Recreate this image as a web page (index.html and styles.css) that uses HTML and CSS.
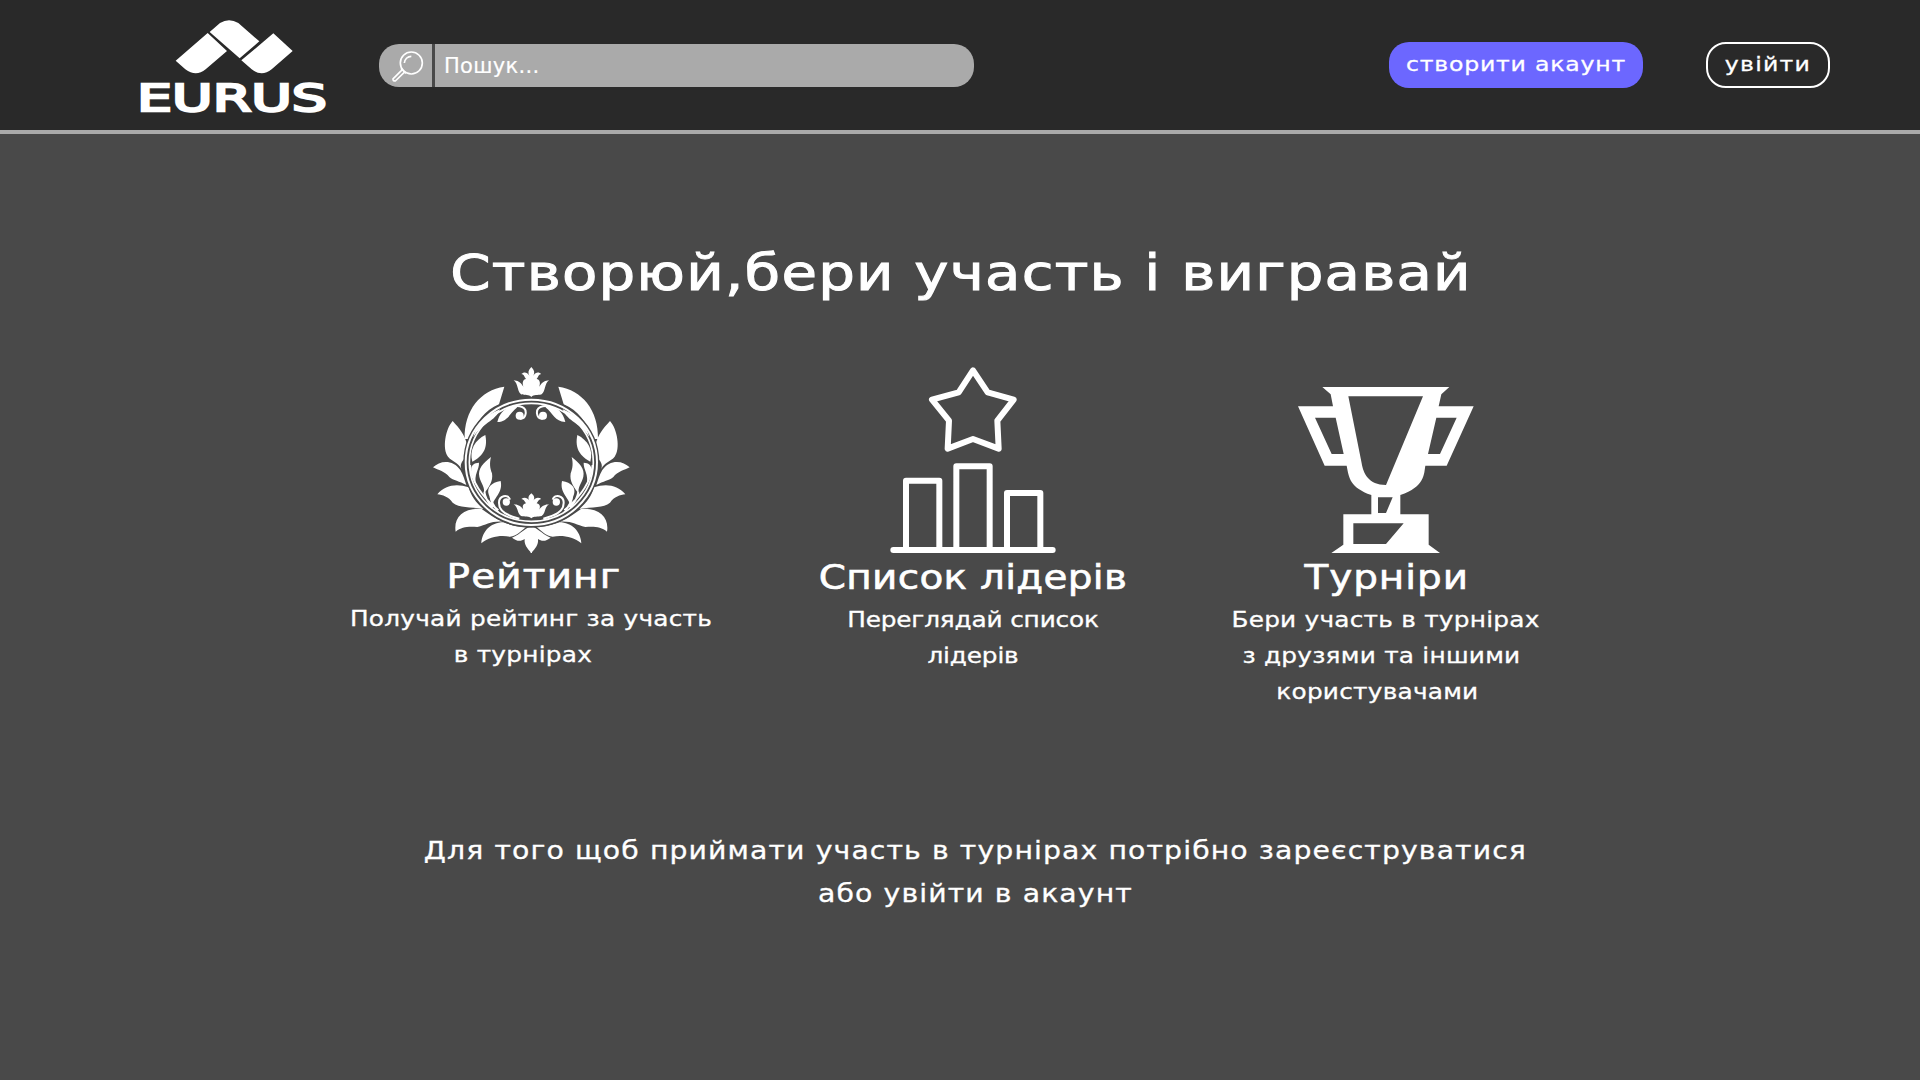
FILE: index.html
```html
<!DOCTYPE html>
<html lang="uk">
<head>
<meta charset="utf-8">
<title>Eurus</title>
<link rel="stylesheet" href="styles.css">
</head>
<body>
<header class="header">
  <a class="logo" aria-label="Eurus">
    <svg width="184" height="93" viewBox="63 57 552 279">
      <path d="M263 99L321 153L257 208Q228 232 196 208L167 182ZM269 96L300 69Q327 52 355 69L418 124L359 175ZM460 100L518 153L455 208Q425 232 395 208L364 181Z"/>
      <text class="logo-text" x="51" y="332" textLength="570" lengthAdjust="spacingAndGlyphs">EURUS</text>
    </svg>
  </a>
  <div class="search">
    <div class="search-icon">
      <svg width="31" height="31" viewBox="95 61 93 93">
        <circle cx="153" cy="97" r="33"/>
        <path d="M132 97A21 21 0 0 1 153 77M126 117L98 145Q97 151 105 151L134 123M122 113L137 128"/>
      </svg>
    </div>
    <span class="search-text">Пошук...</span>
  </div>
  <nav class="actions">
    <a class="btn btn-primary"><span class="btn-label">створити акаунт</span></a>
    <a class="btn btn-outline"><span class="btn-label">увійти</span></a>
  </nav>
</header>
<main class="main">
  <h1 class="title">Створюй,бери участь і вигравай</h1>
  <section class="features">
    <article class="feature feature-rating">
      <div class="feature-icon">
        <svg width="196" height="186" viewBox="39 36 588 558">
          <defs>
            <path id="crown" d="M334 36C325 45 323 53 328 62C321 50 311 50 304 57C312 58 312 64 318 72C309 74 306 82 310 95C301 80 292 77 281 76C296 88 290 106 303 118C316 122 326 118 334 126C342 118 352 122 365 118C378 106 372 88 387 76C376 77 367 80 358 95C362 82 359 74 350 72C356 64 356 58 364 57C357 50 347 50 340 62C345 53 343 45 334 36Z"/>
            <g id="leaves">
              <path d="M253 95C182 105 132 165 134 252L152 252C165 205 195 165 237 148Z"/>
              <path d="M98 198C76 222 66 282 84 305C96 320 115 322 124 342C118 325 130 315 142 300L142 270C133 238 120 222 98 198Z"/>
              <path d="M39 337C60 315 100 313 121 345C130 360 134 375 139 390C118 378 100 377 88 366C75 350 55 345 39 337Z"/>
              <path d="M52 418C75 390 110 385 146 397C152 420 168 444 190 462C150 454 118 460 98 443C85 425 68 420 52 418Z"/>
              <path d="M107 530C100 490 128 457 185 462C205 476 225 492 248 500C210 498 200 510 172 516C145 514 125 515 107 530Z"/>
              <path d="M184 565C186 530 212 502 250 502C272 510 295 516 318 516C302 530 290 542 270 545C240 540 208 545 184 565Z"/>
              <path d="M336 516C318 514 308 534 276 548C290 559 302 560 314 552C312 570 322 580 334 594H336Z"/>
            </g>
            <g id="branch">
              <path d="M160 247C165 215 195 180 240 163C226 200 185 205 160 247Z"/>
              <path d="M232 201C264 200 268 175 292 157C262 150 240 168 232 201Z"/>
              <path d="M196 240C165 255 147 285 157 320C184 305 205 285 196 240Z"/>
              <path d="M177 323C147 325 149 345 168 392C161 355 178 345 177 323Z"/>
              <path d="M213 306C190 325 173 340 178 365C182 385 197 395 191 418C207 395 220 380 216 355C210 340 208 325 213 306Z"/>
              <path d="M242 378C213 383 200 398 206 418C210 430 214 440 218 452C218 430 250 415 242 378Z"/>
              <circle cx="299" cy="182" r="12"/>
              <circle cx="259" cy="441" r="11"/>
              <path class="vine" d="M262 163C285 147 320 150 317 176Q315 192 300 191M270 434C264 415 236 422 237 444C237 472 265 482 298 491M193 410Q196 435 218 458M150 330Q156 400 235 466M212 425Q214 448 236 470"/>
            </g>
          </defs>
          <use href="#leaves"/>
          <use href="#leaves" transform="matrix(-1 0 0 1 668 0)"/>
          <ellipse class="ring-gap" cx="334" cy="322" rx="195" ry="187"/>
          <use href="#branch"/>
          <use href="#branch" transform="matrix(-1 0 0 1 668 0)"/>
          <use href="#crown"/>
          <use href="#crown" transform="translate(0 385) scale(1 .83)"/>
          <ellipse class="ring" cx="334" cy="322" rx="197" ry="188"/>
          <ellipse class="ring-thin" cx="334" cy="322" rx="186" ry="177"/>
        </svg>
      </div>
      <h2 class="feature-title">Рейтинг</h2>
      <p class="feature-text">Получай рейтинг за участь<br>в турнірах&nbsp;&nbsp;</p>
    </article>
    <article class="feature feature-leaders">
      <div class="feature-icon">
        <svg class="line-icon" width="166" height="186" viewBox="60 36 498 558">
          <path d="M309 46L353 112L431 134L382 197L386 281L309 252L233 281L237 197L186 134L266 112ZM70 585H548M108 585V377H208V585M259 585V334H359V585M411 585V414H511V585"/>
        </svg>
      </div>
      <h2 class="feature-title">Список лідерів</h2>
      <p class="feature-text">Переглядай список<br>лідерів</p>
    </article>
    <article class="feature feature-tournaments">
      <div class="feature-icon">
        <svg width="176" height="166" viewBox="54 51 528 498">
          <path fill-rule="evenodd" d="M127 51H508L484 73L476 109H581L500 287H436C432 310 435 350 361 375V433H446V524L480 549H154L190 524V433H274V375C210 352 207 325 200 287H134L54 109H159L152 73ZM105 143H167L191 252H155ZM469 143H530L480 252H444ZM205 79H429L318 345C265 345 250 310 245 280ZM294 382H338L318 429H294ZM220 460H371L318 522H220Z"/>
        </svg>
      </div>
      <h2 class="feature-title">Турніри</h2>
      <p class="feature-text">Бери участь в турнірах<br>з друзями та іншими&nbsp;<br>користувачами&nbsp;&nbsp;</p>
    </article>
  </section>
  <p class="notice">Для того щоб приймати участь в турнірах потрібно зареєструватися<br>або увійти в акаунт</p>
</main>
</body>
</html>
```
FILE: styles.css
```css
* {
  box-sizing: border-box;
}

body {
  margin: 0;
  min-height: 100vh;
  background: #494949;
  color: #fff;
  font-family: "DejaVu Sans", sans-serif;
}

svg {
  display: block;
  fill: #fff;
  overflow: visible;
}

.header {
  display: flex;
  align-items: flex-start;
  height: 134px;
  padding: 19px 90px 0 141px;
  background: #292929;
  border-bottom: 4px solid #aaa;
}

.logo-text {
  font-size: 113px;
  stroke: #fff;
  stroke-width: 7;
}

.search {
  display: flex;
  width: 595px;
  height: 43px;
  margin: 25px 0 0 54px;
  background: #aaa;
  border-radius: 20px;
}

.search-icon {
  width: 56px;
  padding: 7px 0 0 13px;
  border-right: 3px solid #494949;
}

.search-icon svg {
  fill: none;
  stroke: #fff;
  stroke-width: 5;
}

.search-text {
  padding-left: 9px;
  font-size: 21px;
  line-height: 45px;
  letter-spacing: 0.3px;
  -webkit-text-stroke: 0.2px #fff;
}

.actions {
  display: flex;
  gap: 63px;
  margin: 23px 0 0 auto;
}

.btn {
  height: 46px;
  border-radius: 20px;
  font-size: 20px;
  line-height: 44px;
  letter-spacing: 0.65px;
  text-align: center;
  -webkit-text-stroke: 0.3px #fff;
}

.btn-label {
  display: block;
  transform: scaleX(1.18);
}

.btn-primary {
  width: 254px;
  background: #6c67ff;
}

.btn-outline {
  width: 124px;
  border: 2px solid #fff;
  line-height: 40px;
  letter-spacing: 1.05px;
}

.main {
  display: flex;
  flex-direction: column;
  align-items: center;
  padding-top: 110px;
  text-align: center;
}

/* Extended letterforms for all copy on the page */
.title,
.feature-title,
.feature-text,
.notice {
  transform: scaleX(1.18);
  font-weight: 400;
  white-space: nowrap;
}

.title {
  margin: 0;
  padding-left: 2px;
  font-size: 49px;
  line-height: 60px;
  letter-spacing: 1px;
  -webkit-text-stroke: 1px #fff;
}

.features {
  display: grid;
  align-self: flex-start;
  grid-template-columns: 442px 442px 383px;
  margin: 63px 0 0 310px;
}

.feature-icon {
  display: flex;
  align-items: flex-end;
  justify-content: center;
  height: 186px;
}

.feature-title {
  margin: 0;
  padding-left: 5px;
  font-size: 33px;
  line-height: 48px;
  letter-spacing: 1px;
  -webkit-text-stroke: 0.6px #fff;
}

.feature-text {
  margin: 0;
  font-size: 21px;
  line-height: 36px;
  letter-spacing: 0.2px;
  -webkit-text-stroke: 0.3px #fff;
}

.feature-leaders .feature-title,
.feature-tournaments .feature-title {
  padding: 1px 0 0;
}

.feature-leaders .feature-title {
  letter-spacing: 0.25px;
}

.feature-leaders .feature-text {
  letter-spacing: -0.15px;
}

.feature-tournaments .feature-title {
  padding-left: 2px;
  letter-spacing: 0.8px;
}

.vine {
  fill: none;
  stroke: #fff;
  stroke-width: 6;
}

.ring-gap,
.ring,
.ring-thin {
  fill: none;
  stroke: #fff;
  stroke-width: 6;
}

.ring-gap {
  stroke: #494949;
  stroke-width: 18;
}

.ring-thin {
  stroke-width: 5;
}

.line-icon {
  fill: none;
  stroke: #fff;
  stroke-width: 18;
  stroke-linecap: round;
  stroke-linejoin: round;
}

.notice {
  margin: 120px 0 0 30px;
  font-size: 24px;
  line-height: 43px;
  letter-spacing: 0.93px;
  -webkit-text-stroke: 0.3px #fff;
}
```
